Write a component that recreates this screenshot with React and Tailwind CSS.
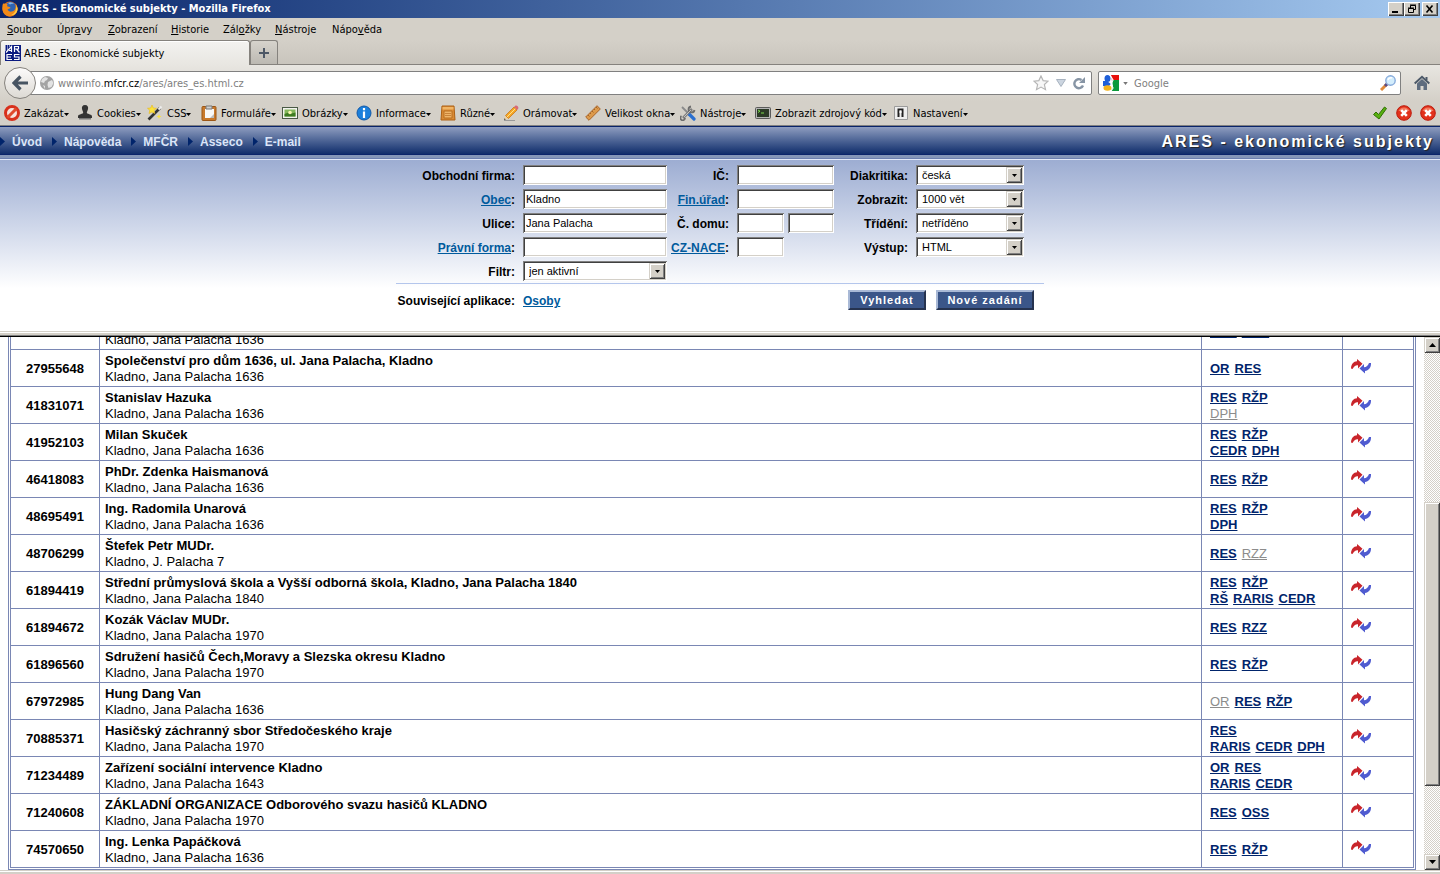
import React from "react";

const rows = [
  { ico: "", name: "", addr: "Kladno, Jana Palacha 1636", links: [["RES", "OSS"]] },
  { ico: "27955648", name: "Společenství pro dům 1636, ul. Jana Palacha, Kladno", addr: "Kladno, Jana Palacha 1636", links: [["OR", "RES"]] },
  { ico: "41831071", name: "Stanislav Hazuka", addr: "Kladno, Jana Palacha 1636", links: [["RES", "RŽP"], ["-DPH"]] },
  { ico: "41952103", name: "Milan Skuček", addr: "Kladno, Jana Palacha 1636", links: [["RES", "RŽP"], ["CEDR", "DPH"]] },
  { ico: "46418083", name: "PhDr. Zdenka Haismanová", addr: "Kladno, Jana Palacha 1636", links: [["RES", "RŽP"]] },
  { ico: "48695491", name: "Ing. Radomila Unarová", addr: "Kladno, Jana Palacha 1636", links: [["RES", "RŽP"], ["DPH"]] },
  { ico: "48706299", name: "Štefek Petr MUDr.", addr: "Kladno, J. Palacha 7", links: [["RES", "-RZZ"]] },
  { ico: "61894419", name: "Střední průmyslová škola a Vyšší odborná škola, Kladno, Jana Palacha 1840", addr: "Kladno, Jana Palacha 1840", links: [["RES", "RŽP"], ["RŠ", "RARIS", "CEDR"]] },
  { ico: "61894672", name: "Kozák Václav MUDr.", addr: "Kladno, Jana Palacha 1970", links: [["RES", "RZZ"]] },
  { ico: "61896560", name: "Sdružení hasičů Čech,Moravy a Slezska okresu Kladno", addr: "Kladno, Jana Palacha 1970", links: [["RES", "RŽP"]] },
  { ico: "67972985", name: "Hung Dang Van", addr: "Kladno, Jana Palacha 1636", links: [["-OR", "RES", "RŽP"]] },
  { ico: "70885371", name: "Hasičský záchranný sbor Středočeského kraje", addr: "Kladno, Jana Palacha 1970", links: [["RES"], ["RARIS", "CEDR", "DPH"]] },
  { ico: "71234489", name: "Zařízení sociální intervence Kladno", addr: "Kladno, Jana Palacha 1643", links: [["OR", "RES"], ["RARIS", "CEDR"]] },
  { ico: "71240608", name: "ZÁKLADNÍ ORGANIZACE Odborového svazu hasičů KLADNO", addr: "Kladno, Jana Palacha 1970", links: [["RES", "OSS"]] },
  { ico: "74570650", name: "Ing. Lenka Papáčková", addr: "Kladno, Jana Palacha 1636", links: [["RES", "RŽP"]] },
];

// [before, accelerator, after, width]
const menus = [
  ["", "S", "oubor", "w-[50px]"],
  ["Úpr", "a", "vy", "w-[51px]"],
  ["", "Z", "obrazení", "w-[63px]"],
  ["", "H", "istorie", "w-[52px]"],
  ["Zál", "o", "žky", "w-[52px]"],
  ["", "N", "ástroje", "w-[57px]"],
  ["Nápo", "v", "ěda", "w-[60px]"],
];

const tools = [
  ["Zakázat", BlockIcon, "w-[73px]"],
  ["Cookies", PersonIcon, "w-[70px]"],
  ["CSS", WandIcon, "w-[54px]"],
  ["Formuláře", ClipboardIcon, "w-[81px]"],
  ["Obrázky", ImageIcon, "w-[74px]"],
  ["Informace", InfoIcon, "w-[84px]"],
  ["Různé", BoxIcon, "w-[63px]"],
  ["Orámovat", PencilIcon, "w-[82px]"],
  ["Velikost okna", RulerIcon, "w-[95px]"],
  ["Nástroje", ToolsIcon, "w-[75px]"],
  ["Zobrazit zdrojový kód", TerminalIcon, "w-[138px]"],
  ["Nastavení", SwitchIcon, "w-[90px]"],
];

export default function App() {
  return (
    <div className="flex h-screen w-full flex-col overflow-hidden bg-[#d4d0c8] font-['DejaVu_Sans_Condensed','DejaVu_Sans',sans-serif] text-[11px] text-black">
      <TitleBar />

      {/* MENU */}
      <nav className="flex h-[22px] shrink-0 items-center pt-[2px] pl-[7px]">
        {menus.map(([a, key, b, w]) => (
          <button key={a + key + b} className={`${w} shrink-0 text-left whitespace-nowrap`}>
            {a}<u>{key}</u>{b}
          </button>
        ))}
      </nav>

      {/* TABS */}
      <div className="flex h-[25px] shrink-0 items-stretch border-b border-[#85827d] bg-gradient-to-b from-[#d4d0c8] to-[#c9c5bd]">
        <div className="-mb-px flex w-[250px] items-center gap-[3px] rounded-t-[3px] border border-b-0 border-[#85827d] bg-gradient-to-b from-[#f3f2f0] to-[#e8e6e1] pl-1 shadow-[inset_0_1px_0_#fff]">
          <AresIcon />
          <span className="pt-[2px]">ARES - Ekonomické subjekty</span>
        </div>
        <button aria-label="Nový panel" className="flex w-[28px] items-center justify-center rounded-t-[3px] border border-b-0 border-[#85827d] bg-gradient-to-b from-[#d6d3cc] to-[#bcb9b2]">
          <svg width="12" height="12" viewBox="0 0 12 12"><path d="M1 6h10M6 1v10" stroke="#4d5866" strokeWidth="2" /></svg>
        </button>
      </div>

      <AddressBar />

      {/* DEVELOPER TOOLBAR */}
      <div className="flex h-[25px] shrink-0 items-center border-b border-[#808080] pb-px pl-1">
        {tools.map(([label, Icon, w]) => (
          <button key={label} className={`${w} flex shrink-0 items-center gap-1 whitespace-nowrap`}>
            <Icon />
            <span className="flex items-center pt-[3px]">
              {label}
              <svg width="5" height="3" viewBox="0 0 5 3"><path d="M0 0h5L2.500 3z" /></svg>
            </span>
          </button>
        ))}
        <div className="ml-auto flex gap-2 pr-1">
          <svg width="16" height="16" viewBox="0 0 16 16"><path d="M1.500 9.500 4 7l2.500 2.500L12.500 2l2 1.500L7 14z" fill="#58b010" stroke="#2f6e05" /></svg>
          <ErrorIcon />
          <ErrorIcon />
        </div>
      </div>

      <div className="flex min-h-0 flex-1 flex-col bg-white font-['Liberation_Sans',Arial,sans-serif]">
        <header className="flex h-[29px] shrink-0 items-center border-y border-[#0a246a] bg-gradient-to-b from-[#8f9dbf] to-[#102d6b] pt-[2px] text-[12px] font-bold text-[#dbe5f8]">
          {["Úvod", "Nápověda", "MFČR", "Asseco", "E-mail"].map((t) => (
            <a key={t} href="#" className="flex items-center gap-[7px] pr-[10px]">
              <svg width="5" height="9" viewBox="0 0 5 9"><path d="M0 0l5 4.500L0 9z" fill="#00246b" /></svg>
              {t}
            </a>
          ))}
          <h1 className="ml-auto pr-[6px] text-[16px] tracking-[2px] text-white [text-shadow:1px_1px_1px_#222]">ARES - ekonomické subjekty</h1>
        </header>
        <div className="h-1 shrink-0 border-b border-[#6c80b0] bg-[#8496b8]" />

        <SearchForm />
        <div className="h-[6px] shrink-0 border-t border-b border-t-[#d4d0c8] border-b-black bg-[#d4d0c8] shadow-[inset_0_1px_0_#fff,inset_0_-1px_0_#808080]" />

        <main className="flex min-h-0 flex-1">
          <div className="flex min-w-0 flex-1 flex-col justify-end overflow-hidden px-2">
            <Results />
          </div>
          <ScrollBar />
        </main>
      </div>

      <div className="h-1 shrink-0 border-t border-[#d4d0c8] shadow-[inset_0_1px_0_#fff]" />
    </div>
  );
}

/* ================= BROWSER ================= */

function TitleBar() {
  const btn =
    "flex h-[14px] w-4 items-center justify-center bg-[#d4d0c8] shadow-[inset_1px_1px_0_#fff,inset_-1px_-1px_0_#404040,inset_-2px_-2px_0_#808080]";
  return (
    <div className="flex h-[18px] shrink-0 items-center bg-gradient-to-r from-[#0a246a] to-[#a6caf0] pr-[2px] pl-[2px] font-bold text-white">
      <svg width="16" height="16" viewBox="0 0 16 16">
        <circle cx="8" cy="8" r="7.500" fill="#e66a10" />
        <circle cx="8.500" cy="6.500" r="5.500" fill="#2f64b4" />
        <path d="M6 2c2-1.500 5-.5 6 1-2-.5-3 .5-4 .5z" fill="#86b7e8" />
        <path d="M1 2.500C-.5 7 0 14 7 15.500c5 .5 9-4 8.500-9-.5-2-1-3-2-4 .5 3 .5 7-3.500 8-2 .5-4-.5-4.500-2l3-1.500c0-1.500-3-1-3.500-2L5.500 3z" fill="#f28a18" />
        <path d="M14 4c1 4-1 9-5 10 4 .5 7-3 6.500-7z" fill="#fcd04a" />
      </svg>
      <span className="ml-[2px] pt-px whitespace-nowrap">ARES - Ekonomické subjekty - Mozilla Firefox</span>
      <div className="ml-auto flex">
        <button aria-label="Minimalizovat" className={btn}>
          <svg width="10" height="8" viewBox="0 0 10 8"><path d="M1 6h6v2H1z" /></svg>
        </button>
        <button aria-label="Obnovit" className={btn}>
          <svg width="10" height="10" viewBox="0 0 10 10" fill="none" stroke="#000">
            <path d="M3.500 4V1.500h5v4H7M3 1h6M1.500 4.500h5v4h-5zM1 4h6" />
          </svg>
        </button>
        <button aria-label="Zavřít" className={`${btn} ml-[2px]`}>
          <svg width="10" height="8" viewBox="0 0 10 8"><path d="M1.500 .5l6 7M7.500 .5l-6 7" stroke="#000" strokeWidth="1.600" /></svg>
        </button>
      </div>
    </div>
  );
}

function AddressBar() {
  return (
    <div className="flex h-[36px] shrink-0 items-center bg-gradient-to-b from-[#e8e6e1] to-[#d4d0c8] pr-[10px] pl-1 text-[#808080]">
      <button aria-label="Zpět" className="z-10 flex size-8 shrink-0 items-center justify-center rounded-full border border-[#85827d] bg-gradient-to-b from-[#fbfafa] to-[#dddad4]">
        <svg width="16" height="16" viewBox="0 0 16 16"><path d="M8.500 1.500 2 8l6.500 6.500M3 8h13" fill="none" stroke="#475462" strokeWidth="3.200" /></svg>
      </button>
      <div className="-ml-2 flex h-6 flex-1 items-center rounded-[2px] border border-[#808080] bg-white pr-[5px] pl-[11px]">
        <svg className="shrink-0" width="14" height="14" viewBox="0 0 14 14">
          <circle cx="7" cy="7" r="7" fill="#a3a3a3" />
          <path d="M2 3l3-2 3 1-1 2-2 1-1 2-3-1zM8 6l4-2 1.500 3-2 4-3 1-1-3zM3 9l2 1v3z" fill="#e3e3e3" />
        </svg>
        <div className="ml-1 flex-1 pt-[2px]">wwwinfo.<span className="text-black">mfcr.cz</span>/ares/ares_es.html.cz</div>
        <div className="flex items-center gap-[7px]">
          <svg width="16" height="16" viewBox="0 0 18 18"><path d="M9 1l2.400 5.300 5.600.6-4.200 3.800 1.300 5.800L9 13.600l-5.100 2.900 1.300-5.800L1 6.900l5.600-.6z" fill="#f7f7f7" stroke="#b5b5b5" strokeWidth="1.300" /></svg>
          <svg width="10" height="8" viewBox="0 0 10 8"><path d="M.5 .5h9L5 7.500z" fill="#ccd5e0" stroke="#a7b2bf" /></svg>
          <svg width="13" height="13" viewBox="0 0 13 13"><path d="M10 8.500A4.500 4.500 0 1 1 8.500 3" fill="none" stroke="#8795a5" strokeWidth="2.400" /><path d="M12 0v6H6z" fill="#8795a5" /></svg>
        </div>
      </div>
      <div className="ml-[6px] flex h-6 w-[303px] items-center rounded-[2px] border border-[#808080] bg-white px-1">
        <svg className="shrink-0" width="16" height="16" viewBox="0 0 16 16">
          <path d="M8 0h8v6H9z" fill="#e8100c" />
          <path d="M9 5h7v11H8l2-5z" fill="#0c9a3c" />
          <path d="M0 6h4l4 3-3 3-5-1z" fill="#1f5fd8" />
          <ellipse cx="4.500" cy="3.500" rx="3" ry="3.500" fill="#1f5fd8" />
          <ellipse cx="4.500" cy="13" rx="4" ry="2.800" fill="#f6b31a" />
          <path d="M7 0l3 5-2 4 2 4-2 3" fill="none" stroke="#fff" strokeWidth="1.200" />
        </svg>
        <svg className="mx-1 shrink-0" width="5" height="3" viewBox="0 0 6 4"><path d="M0 0h6L3 4z" fill="#777" /></svg>
        <input aria-label="Google" placeholder="Google" className="ml-[2px] min-w-0 flex-1 pt-[2px] outline-none placeholder:text-[#808080]" />
        <svg className="shrink-0" width="16" height="16" viewBox="0 0 16 16">
          <path d="M1 15l6-6" stroke="#e08a3a" strokeWidth="3" /><path d="M5 11l2-2" stroke="#5b4d86" strokeWidth="3" />
          <circle cx="10.500" cy="5.500" r="4.700" fill="#d3edfc" stroke="#87abdb" strokeWidth="1.400" />
          <path d="M8 5a3 3 0 0 1 4-2" stroke="#fff" strokeWidth="1.500" fill="none" />
        </svg>
      </div>
      <svg className="ml-[13px] shrink-0" width="16" height="16" viewBox="0 0 16 16">
        <path d="M.7 8.500 8 1.800l7.300 6.700" fill="none" stroke="#4c5968" strokeWidth="2" />
        <path d="M3 8.500 8 4l5 4.500V15H9.500v-4h-3v4H3z" fill="#5e6c7e" />
        <path d="M11.500 2h2v3h-2z" fill="#4c5968" />
      </svg>
    </div>
  );
}

function ScrollBar() {
  const face =
    "bg-[#d4d0c8] shadow-[inset_1px_1px_0_#d4d0c8,inset_-1px_-1px_0_#404040,inset_2px_2px_0_#fff,inset_-2px_-2px_0_#808080]";
  return (
    <div className="flex w-4 shrink-0 flex-col bg-[repeating-conic-gradient(#d4d0c8_0_25%,#fff_0_50%)] bg-[length:2px_2px]">
      <button aria-label="Nahoru" className={`${face} flex h-4 shrink-0 items-center justify-center`}>
        <svg width="7" height="4" viewBox="0 0 7 4"><path d="M0 4h7L3.500 0z" /></svg>
      </button>
      <div className="grow-[149]" />
      <div className={`${face} grow-[284]`} />
      <div className="grow-[68]" />
      <button aria-label="Dolů" className={`${face} flex h-4 shrink-0 items-center justify-center`}>
        <svg width="7" height="4" viewBox="0 0 7 4"><path d="M0 0h7L3.500 4z" /></svg>
      </button>
    </div>
  );
}

/* ================= ARES ================= */

function Label({ id, link, children }) {
  return (
    <label htmlFor={id} className="flex justify-end pt-[2px] whitespace-nowrap">
      {link ? <a href="#" className="text-[#005a9c] underline">{children}</a> : children}:
    </label>
  );
}

function Field({ id, value = "", label }) {
  return (
    <input
      id={id}
      aria-label={label}
      defaultValue={value}
      className="h-5 w-full min-w-0 bg-white px-[3px] text-[11px] font-normal shadow-[inset_1px_1px_0_#808080,inset_-1px_-1px_0_#fff,inset_2px_2px_0_#404040,inset_-2px_-2px_0_#d4d0c8] outline-none"
    />
  );
}

function Select({ id, value }) {
  return (
    <div className="relative flex h-5">
      <select
        id={id}
        className="w-full appearance-none bg-white pl-[6px] text-[11px] font-normal shadow-[inset_1px_1px_0_#808080,inset_-1px_-1px_0_#fff,inset_2px_2px_0_#404040,inset_-2px_-2px_0_#d4d0c8]"
      >
        <option>{value}</option>
      </select>
      <span className="pointer-events-none absolute top-[2px] right-[2px] flex h-4 w-4 items-center justify-center bg-[#d4d0c8] shadow-[inset_1px_1px_0_#d4d0c8,inset_-1px_-1px_0_#404040,inset_2px_2px_0_#fff,inset_-2px_-2px_0_#808080]">
        <svg width="5" height="3" viewBox="0 0 5 3"><path d="M0 0h5L2.500 3z" /></svg>
      </span>
    </div>
  );
}

function SearchForm() {
  const btn =
    "h-5 border-2 border-t-[#a9b9d6] border-l-[#a9b9d6] border-r-[#26334f] border-b-[#26334f] bg-[#3b5689] text-[11px] leading-none font-bold tracking-[1px] text-white";
  return (
    <form
      onSubmit={(e) => e.preventDefault()}
      className="h-[172px] shrink-0 border-t border-[#e0e8f8] bg-gradient-to-b from-[#9dadd2] to-white to-[75%] pt-[5px] text-[12px] font-bold"
    >
      <div className="mx-auto w-[648px]">
        <div className="grid grid-cols-[119px_144px_54px_97px_66px_108px] items-center gap-x-2 gap-y-1">
          <Label id="firma">Obchodní firma</Label>
          <Field id="firma" />
          <Label id="ic">IČ</Label>
          <Field id="ic" />
          <Label id="dia">Diakritika</Label>
          <Select id="dia" value="česká" />

          <Label id="obec" link>Obec</Label>
          <Field id="obec" value="Kladno" />
          <Label id="fin" link>Fin.úřad</Label>
          <Field id="fin" />
          <Label id="zob">Zobrazit</Label>
          <Select id="zob" value="1000 vět" />

          <Label id="ulice">Ulice</Label>
          <Field id="ulice" value="Jana Palacha" />
          <Label id="dum">Č. domu</Label>
          <div className="flex gap-1">
            <Field id="dum" />
            <Field label="Č. orientační" />
          </div>
          <Label id="tri">Třídění</Label>
          <Select id="tri" value="netříděno" />

          <Label id="pf" link>Právní forma</Label>
          <Field id="pf" />
          <Label id="nace" link>CZ-NACE</Label>
          <div className="w-[47px]"><Field id="nace" /></div>
          <Label id="vys">Výstup</Label>
          <Select id="vys" value="HTML" />

          <Label id="filtr">Filtr</Label>
          <Select id="filtr" value="jen aktivní" />
        </div>

        <div className="mt-[2px] flex items-center border-t border-[#b4c6ec] pt-[6px] pr-[10px]">
          <span className="w-[119px] pt-[2px] text-right whitespace-nowrap">Související aplikace:</span>
          <a href="#" className="ml-2 pt-[2px] text-[#005a9c] underline">Osoby</a>
          <button className={`${btn} ml-auto w-[78px]`}>Vyhledat</button>
          <button className={`${btn} ml-[10px] w-[98px]`}>Nové zadání</button>
        </div>
      </div>
    </form>
  );
}

function Results() {
  const td = "border border-[#7a87b4] pt-[2px]";
  return (
    <div className="shrink-0 border border-[#7a87b4] p-px text-[13px] leading-4">
      <table className="w-full table-fixed border-collapse">
        <colgroup>
          <col className="w-[89px]" />
          <col />
          <col className="w-[141px]" />
          <col className="w-[71px]" />
        </colgroup>
        <tbody>
          {rows.map((r, i) => (
            <tr key={i} className="h-[37px]">
              <td className={`${td} text-center font-bold`}>{r.ico}</td>
              <td className={`${td} pl-[5px]`}>
                <div className="min-h-4 font-bold">{r.name}</div>
                <div>{r.addr}</div>
              </td>
              <td className={`${td} pl-2`}>
                {r.links.map((line, j) => (
                  <div key={j} className="flex gap-[5px]">
                    {line.map((l) =>
                      l[0] === "-" ? (
                        <a key={l} href="#" className="text-[#8c8c8c] underline">{l.slice(1)}</a>
                      ) : (
                        <a key={l} href="#" className="font-bold text-[#00246b] underline">{l}</a>
                      )
                    )}
                  </div>
                ))}
              </td>
              <td className={`${td} pl-2`}>
                <a href="#" aria-label="Vazby" className="block pb-[6px]"><ArrowsIcon /></a>
              </td>
            </tr>
          ))}
        </tbody>
      </table>
    </div>
  );
}

/* ================= ICONS ================= */

function Svg({ children }) {
  return <svg className="shrink-0" width="16" height="16" viewBox="0 0 16 16">{children}</svg>;
}

function ArrowsIcon() {
  return (
    <svg width="20" height="15" viewBox="0 0 20 15">
      <path d="M0 9.500C.3 5 2.500 2.500 6 2.300V0L11.500 4.700 7 9.500V6.300C4.500 6 3 7.500 1.500 10z" fill="#c9252b" />
      <path d="M20 4c.2 4.500-2 7.500-6 8v2.500L8.500 9.500 13 5v3.300c2.500 0 4-1.800 5-4.300z" fill="#4f5bd0" />
    </svg>
  );
}

function AresIcon() {
  return (
    <Svg>
      <path d="M0 0h16v16H0z" fill="#0a1a80" />
      <path d="M0 1h6M0 3h4M0 5h3" stroke="#fff" strokeDasharray="1 1" />
      <path d="M1 7.500 6.500 1.500V7M4 5.500h3M9.500 7V1.500h4v2.500h-4M11.500 4l3 3.500M7 9.500H2v5h5M2 12h4M14.500 9.500h-5V12h4.500v2.500H9" fill="none" stroke="#fff" strokeWidth="1.200" />
    </Svg>
  );
}

function BlockIcon() {
  return (
    <Svg>
      <circle cx="8" cy="8" r="6.500" fill="#f6e3dd" stroke="#d8301c" strokeWidth="3" />
      <path d="M3.500 12.500l9-9" stroke="#e04a2c" strokeWidth="3" />
    </Svg>
  );
}

function PersonIcon() {
  return (
    <Svg>
      <path d="M8 0C5.500 0 4.500 2 5 4c.3 1.500 1.200 2.500 1.200 4C5 9.500 1 9 1 11.500V13h14v-1.500C15 9 11 9.500 9.800 8c0-1.500 1-2.500 1.200-4 .5-2-.5-4-3-4z" fill="#333" />
      <path d="M2 13h12v1.500H2z" fill="#777" />
    </Svg>
  );
}

function WandIcon() {
  return (
    <Svg>
      <path d="M1.500 14.500 13 3" stroke="#333" strokeWidth="2.600" />
      <path d="M11.500 4.500 14.500 1.500" stroke="#eee" strokeWidth="2" />
      <path d="M5 0l1.300 3 3.200.3-2.500 2L7.800 8.500 5 7 2 8.500l.8-3.200L.5 3.300 3.700 3z" fill="#fbe23c" stroke="#e8b91a" strokeWidth=".6" />
      <path d="M12 9l.7 1.800 1.800.7-1.800.7L12 14l-.7-1.800-1.800-.7 1.800-.7z" fill="#fbe23c" />
    </Svg>
  );
}

function ClipboardIcon() {
  return (
    <Svg>
      <rect x="1" y="1.500" width="14" height="14" rx="1" fill="#c97a2c" stroke="#9c5615" />
      <path d="M4 4h9v9H4z" fill="#f8f8f8" /><path d="M9 13l4-4v4z" fill="#bbb" />
      <path d="M5 1h6v3H5z" fill="#d0d0d0" stroke="#777" />
    </Svg>
  );
}

function ImageIcon() {
  return (
    <Svg>
      <rect x=".5" y="2.500" width="15" height="11" fill="#f3f3ef" stroke="#4a5a45" />
      <path d="M2.500 4.500h11v7h-11z" fill="#84b75a" />
      <path d="M2.500 9l4-1.500 3 1 4-1v4h-11z" fill="#3e7c22" />
      <circle cx="8" cy="7.500" r="1.800" fill="#f8f5b0" />
    </Svg>
  );
}

function InfoIcon() {
  return (
    <Svg>
      <circle cx="8" cy="8" r="7" fill="#1b7fdb" stroke="#1259a8" />
      <path d="M8 3v2.200M8 6.500V13" stroke="#fff" strokeWidth="2.200" />
    </Svg>
  );
}

function BoxIcon() {
  return (
    <Svg>
      <path d="M2 1h12l1 14H1z" fill="#d98a35" stroke="#ad6114" />
      <path d="M2.500 2h11v2.500h-11z" fill="#f1b565" />
      <path d="M4 6h8v7H4z" fill="#efb468" stroke="#b86e20" />
      <path d="M5 8.500h6M5 10.500h6" stroke="#c98238" />
    </Svg>
  );
}

function PencilIcon() {
  return (
    <Svg>
      <path d="M1 15.500h11" stroke="#999" />
      <path d="M1 15l1.500-4.500L5.500 13.500z" fill="#edd0a0" />
      <path d="M2.500 10.500 11 2l3 3-8.500 8.500z" fill="#f5a623" stroke="#c46f10" strokeWidth=".7" />
      <path d="M4 12 12.500 3.500" stroke="#fde08a" />
      <path d="M11 2l1-1c1.500-1.500 4.500 1 3 3l-1 1z" fill="#d86a76" />
      <path d="M1 15l.6-1.800 1.200 1.200z" fill="#333" />
    </Svg>
  );
}

function RulerIcon() {
  return (
    <Svg>
      <path d="M.7 12 12 .7 15.300 4 4 15.300z" fill="#dc9a4c" stroke="#a8662a" />
      <path d="M3 10l1.500 1.500M5 8l1 1M7 6l1.500 1.500M9 4l1 1M11 2l1.500 1.500" stroke="#96571c" strokeWidth=".8" />
    </Svg>
  );
}

function ToolsIcon() {
  return (
    <Svg>
      <path d="M2 2l7 7" stroke="#8a8a8a" strokeWidth="1.800" />
      <path d="M9 9l5 5" stroke="#2a6fd0" strokeWidth="3.200" strokeLinecap="round" />
      <path d="M3 13 12 4" stroke="#7d7d7d" strokeWidth="2.600" />
      <path d="M11 1.500a3 3 0 1 0 3.500 3.500M1.500 11a2.300 2.300 0 1 0 3.500 2" fill="none" stroke="#6d6d6d" strokeWidth="1.800" />
      <path d="M4 12 11 5" stroke="#d5d5d5" strokeWidth=".8" />
    </Svg>
  );
}

function TerminalIcon() {
  return (
    <Svg>
      <rect x=".5" y="2.500" width="15" height="11" rx="1" fill="#b5b5b5" stroke="#5b5b5b" />
      <path d="M2 4h12v8H2z" fill="#2b3a26" />
      <path d="M3 5l2 1.200L3 7.500M6 8h3" stroke="#7bd84a" fill="none" />
    </Svg>
  );
}

function SwitchIcon() {
  return (
    <Svg>
      <path d="M1.500 1.500h13v13h-13z" fill="#eee" stroke="#9b9b9b" />
      <path d="M5.500 12V4.500h4V12" fill="none" stroke="#222" strokeWidth="2" />
      <path d="M6.500 5.500h2V8h-2z" fill="#fff" />
    </Svg>
  );
}

function ErrorIcon() {
  return (
    <Svg>
      <circle cx="8" cy="8" r="7.300" fill="#e2321c" stroke="#bc1b0c" />
      <path d="M2.500 6a6 6 0 0 1 11 0z" fill="#f47a5e" />
      <path d="M5.200 5.200l5.600 5.600M10.800 5.200l-5.600 5.600" stroke="#fff" strokeWidth="2.600" />
    </Svg>
  );
}
